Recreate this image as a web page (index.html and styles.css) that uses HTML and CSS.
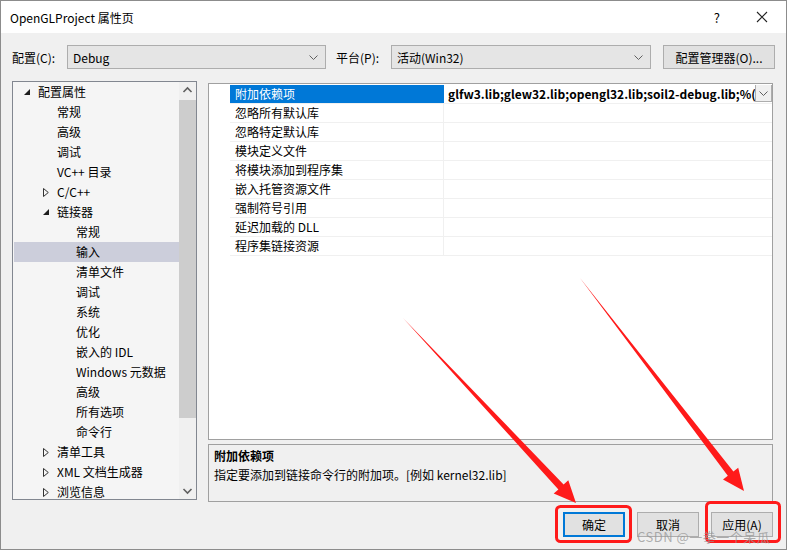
FILE: index.html
```html
<!DOCTYPE html>
<html lang="zh-CN">
<head>
    <meta charset="UTF-8">
    <title>OpenGLProject 属性页</title>
    <link rel="stylesheet" href="styles.css">
</head>
<body>
    <div class="dialog">
        <!-- Title bar -->
        <div class="titlebar">
            <span class="title">OpenGLProject 属性页</span>
            <span class="help">?</span>
            <svg class="close" width="12" height="12" viewBox="0 0 12 12">
                <path d="M1 1 L11 11 M11 1 L1 11" stroke="#222" stroke-width="1.1" fill="none"/>
            </svg>
        </div>

        <!-- Configuration / platform -->
        <div class="toolbar">
            <span class="tb-label">配置(C):</span>
            <div class="combo combo-config">
                <span>Debug</span>
                <svg class="chev" width="9" height="5" viewBox="0 0 9 5"><path d="M0.5 0.5 L4.5 4.5 L8.5 0.5" stroke="#606060" fill="none"/></svg>
            </div>
            <span class="tb-label tb-platform">平台(P):</span>
            <div class="combo combo-platform">
                <span>活动(Win32)</span>
                <svg class="chev" width="9" height="5" viewBox="0 0 9 5"><path d="M0.5 0.5 L4.5 4.5 L8.5 0.5" stroke="#606060" fill="none"/></svg>
            </div>
            <button class="btn btn-manager">配置管理器(O)...</button>
        </div>

        <div class="main">
            <!-- Tree -->
            <div class="tree">
                <div class="tree-items">
                    <div class="node lvl0"><svg class="tri" width="6" height="6" viewBox="0 0 6 6"><polygon points="6,0 6,6 0,6" fill="#1e1e1e"/></svg>配置属性</div>
                    <div class="node lvl1">常规</div>
                    <div class="node lvl1">高级</div>
                    <div class="node lvl1">调试</div>
                    <div class="node lvl1">VC++ 目录</div>
                    <div class="node lvl1"><svg class="tri tri-closed" width="6" height="9" viewBox="0 0 6 9"><polygon points="0.5,0.5 5.3,4.5 0.5,8.5" fill="none" stroke="#333"/></svg>C/C++</div>
                    <div class="node lvl1"><svg class="tri" width="6" height="6" viewBox="0 0 6 6"><polygon points="6,0 6,6 0,6" fill="#1e1e1e"/></svg>链接器</div>
                    <div class="node lvl2">常规</div>
                    <div class="node lvl2 selected">输入</div>
                    <div class="node lvl2">清单文件</div>
                    <div class="node lvl2">调试</div>
                    <div class="node lvl2">系统</div>
                    <div class="node lvl2">优化</div>
                    <div class="node lvl2">嵌入的 IDL</div>
                    <div class="node lvl2">Windows 元数据</div>
                    <div class="node lvl2">高级</div>
                    <div class="node lvl2">所有选项</div>
                    <div class="node lvl2">命令行</div>
                    <div class="node lvl1"><svg class="tri tri-closed" width="6" height="9" viewBox="0 0 6 9"><polygon points="0.5,0.5 5.3,4.5 0.5,8.5" fill="none" stroke="#333"/></svg>清单工具</div>
                    <div class="node lvl1"><svg class="tri tri-closed" width="6" height="9" viewBox="0 0 6 9"><polygon points="0.5,0.5 5.3,4.5 0.5,8.5" fill="none" stroke="#333"/></svg>XML 文档生成器</div>
                    <div class="node lvl1"><svg class="tri tri-closed" width="6" height="9" viewBox="0 0 6 9"><polygon points="0.5,0.5 5.3,4.5 0.5,8.5" fill="none" stroke="#333"/></svg>浏览信息</div>
                </div>
                <div class="scrollbar">
                    <svg class="sb-arrow" width="17" height="17" viewBox="0 0 17 17"><path d="M4.5 10 L8.5 6 L12.5 10" stroke="#606060" stroke-width="1.6" fill="none"/></svg>
                    <div class="sb-track"><div class="sb-thumb"></div></div>
                    <svg class="sb-arrow" width="17" height="17" viewBox="0 0 17 17"><path d="M4.5 7 L8.5 11 L12.5 7" stroke="#606060" stroke-width="1.6" fill="none"/></svg>
                </div>
            </div>

            <div class="right">
                <!-- Property grid -->
                <div class="grid">
                    <div class="row">
                        <div class="name active">附加依赖项</div>
                        <div class="value">
                            <span class="value-text">glfw3.lib;glew32.lib;opengl32.lib;soil2-debug.lib;%(AdditionalDependencies)</span>
                            <span class="drop"><svg width="9" height="5" viewBox="0 0 9 5"><path d="M0.5 0.5 L4.5 4.5 L8.5 0.5" stroke="#606060" fill="none"/></svg></span>
                        </div>
                    </div>
                    <div class="row"><div class="name">忽略所有默认库</div><div class="value"></div></div>
                    <div class="row"><div class="name">忽略特定默认库</div><div class="value"></div></div>
                    <div class="row"><div class="name">模块定义文件</div><div class="value"></div></div>
                    <div class="row"><div class="name">将模块添加到程序集</div><div class="value"></div></div>
                    <div class="row"><div class="name">嵌入托管资源文件</div><div class="value"></div></div>
                    <div class="row"><div class="name">强制符号引用</div><div class="value"></div></div>
                    <div class="row"><div class="name">延迟加载的 DLL</div><div class="value"></div></div>
                    <div class="row"><div class="name">程序集链接资源</div><div class="value"></div></div>
                </div>

                <!-- Description -->
                <div class="desc">
                    <div class="desc-title">附加依赖项</div>
                    <div class="desc-text">指定要添加到链接命令行的附加项。[例如 kernel32.lib]</div>
                </div>
            </div>
        </div>

        <div class="buttons">
            <button class="btn btn-default">确定</button>
            <button class="btn">取消</button>
            <button class="btn">应用(A)</button>
        </div>
    </div>

    <!-- Annotation overlay -->
    <svg class="annot" width="787" height="552" viewBox="0 0 787 552">
        <rect x="556.5" y="506.5" width="74" height="35" rx="4" fill="none" stroke="#ff1a1a" stroke-width="3"/>
        <rect x="706.5" y="502.5" width="73" height="39" rx="4" fill="none" stroke="#ff1a1a" stroke-width="3"/>
        <polygon points="403,318 558.4,489.4 553.7,493.6 576,503 568.3,480.2 563.6,484.4" fill="#ff1a1a"/>
        <polygon points="580,278 727.8,475.7 723,479.5 744,491 738.2,467.7 733.4,471.5" fill="#ff1a1a"/>
    </svg>
    <div class="watermark">CSDN @一拳一个呆瓜</div>
</body>
</html>
```

FILE: styles.css
```css
body {
    margin: 0;
    width: 787px;
    height: 552px;
    background-color: #ffffff;
    font-family: "Noto Sans CJK SC", "Noto Sans", sans-serif;
    font-size: 12px;
    color: #000;
    position: relative;
    overflow: hidden;
}

.dialog {
    width: 787px;
    height: 550px;
    box-sizing: border-box;
    border: 1px solid #8c8c8c;
    background-color: #f0f0f0;
    display: flex;
    flex-direction: column;
}

/* Title bar */
.titlebar {
    height: 32px;
    flex-shrink: 0;
    background-color: #fff;
    display: flex;
    align-items: center;
    padding-left: 9px;
}

.title {
    flex: 1;
    font-size: 12px;
}

.help {
    font-size: 13px;
    margin-right: 36px;
}

.close {
    margin-right: 18px;
}

/* Toolbar */
.toolbar {
    margin-top: 12px;
    height: 24px;
    display: flex;
    align-items: center;
    padding-left: 11px;
}

.tb-label {
    width: 55px;
}

.tb-platform {
    margin-left: 10px;
}

.combo {
    height: 24px;
    box-sizing: border-box;
    border: 1px solid #adadad;
    background-color: #e5e5e5;
    display: flex;
    align-items: center;
    justify-content: space-between;
    padding: 0 7px 0 5px;
}

.combo-config {
    width: 259px;
}

.combo-platform {
    width: 260px;
}

.btn {
    font-family: inherit;
    font-size: 12px;
    color: #000;
    background-color: #e1e1e1;
    border: 1px solid #adadad;
    padding: 0;
    height: 25px;
    width: 62px;
    box-sizing: border-box;
}

.btn-manager {
    margin-left: 12px;
    width: 112px;
    height: 24px;
}

/* Main area */
.main {
    margin-top: 12px;
    padding-left: 11px;
    display: flex;
    height: 421px;
}

.tree {
    width: 185px;
    height: 419px;
    box-sizing: border-box;
    border: 1px solid #828790;
    background-color: #f5f5f5;
    display: flex;
    overflow: hidden;
}

.tree-items {
    width: 166px;
    padding-left: 1px;
}

.node {
    height: 20px;
    line-height: 20px;
    white-space: nowrap;
    display: flex;
    align-items: center;
    box-sizing: border-box;
}

.lvl0 {
    padding-left: 24px;
}

.lvl1 {
    padding-left: 43px;
}

.lvl2 {
    padding-left: 62px;
}

.tri {
    margin-left: -14px;
    margin-right: 8px;
    flex-shrink: 0;
}

.tri-closed {
    margin-left: -14px;
    margin-right: 8px;
}

.selected {
    background-color: #cccedb;
}

.scrollbar {
    width: 17px;
    background-color: #f0f0f0;
    display: flex;
    flex-direction: column;
    height: 417px;
}

.sb-track {
    flex: 1;
    padding-top: 1px;
}

.sb-thumb {
    height: 318px;
    background-color: #cdcdcd;
}

.right {
    margin-left: 11px;
    width: 565px;
    display: flex;
    flex-direction: column;
}

/* Property grid */
.grid {
    margin-top: 2px;
    height: 357px;
    box-sizing: border-box;
    border: 1px solid #a0a0a0;
    background-color: #fff;
    padding: 1px 0 0 21px;
}

.row {
    display: flex;
    height: 19px;
    box-sizing: border-box;
    border-bottom: 1px solid #f0f0f0;
}

.name {
    width: 214px;
    padding-left: 5px;
    box-sizing: border-box;
    line-height: 18px;
    border-right: 1px solid #f0f0f0;
    white-space: nowrap;
}

.name.active {
    background-color: #0078d7;
    color: #fff;
    border-right-color: #0078d7;
}

.value {
    flex: 1;
    display: flex;
    overflow: hidden;
    line-height: 18px;
}

.value-text {
    flex: 1;
    padding-left: 4px;
    font-weight: bold;
    white-space: nowrap;
    overflow: hidden;
}

.drop {
    width: 17px;
    height: 18px;
    box-sizing: border-box;
    border: 1px solid #adadad;
    background-color: #f0f0f0;
    display: flex;
    align-items: center;
    justify-content: center;
    flex-shrink: 0;
    margin-top: -1px;
}

/* Description panel */
.desc {
    margin-top: 4px;
    height: 58px;
    box-sizing: border-box;
    border: 1px solid #a0a0a0;
    padding: 1px 5px;
    line-height: 19px;
}

.desc-title {
    font-weight: bold;
}

/* Bottom buttons */
.buttons {
    margin-top: 10px;
    display: flex;
    justify-content: flex-end;
    gap: 12px;
    padding-right: 13px;
}

.btn-default {
    border: 2px solid #0078d7;
}

/* Overlays */
.annot {
    position: absolute;
    top: 0;
    left: 0;
    pointer-events: none;
}

.watermark {
    position: absolute;
    left: 637px;
    top: 527px;
    font-size: 13px;
    color: rgba(150, 150, 150, 0.75);
    white-space: nowrap;
    letter-spacing: 0.5px;
}
```
